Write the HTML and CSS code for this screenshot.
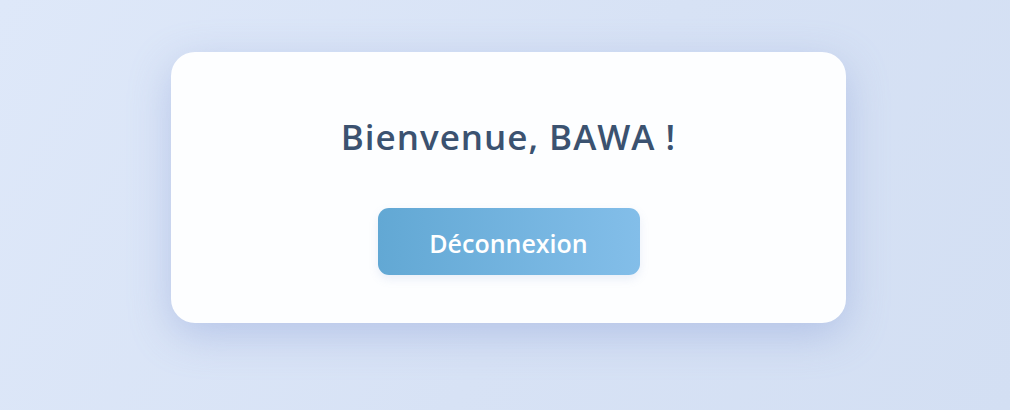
FILE: index.html
```html
<!DOCTYPE html>
<html lang="fr">
<head>
<meta charset="utf-8">
<title>Bienvenue</title>
<link rel="stylesheet" href="styles.css">
</head>
<body>
<main class="page">
  <section class="card">
    <h1 class="title">Bienvenue, BAWA !</h1>
    <button class="logout" type="button">Déconnexion</button>
  </section>
</main>
</body>
</html>
```
FILE: styles.css
```css
html, body {
  margin: 0;
  height: 100%;
}
body {
  background: linear-gradient(120deg, #dee8f9 0%, #d7e2f5 55%, #d3dff3 100%);
  font-family: "Open Sans", "Noto Sans", sans-serif;
}
.page {
  display: flex;
  justify-content: center;
  padding: 52px 0 0 7px;
  box-sizing: border-box;
}
.card {
  width: 675px;
  height: 271px;
  box-sizing: border-box;
  background: #fdfeff;
  border-radius: 24px;
  box-shadow: 0 12px 40px rgba(140, 160, 215, 0.45);
  display: flex;
  flex-direction: column;
  align-items: center;
  padding-top: 62px;
}
.title {
  margin: 0;
  font-size: 35px;
  font-weight: 600;
  line-height: 46px;
  letter-spacing: 1px;
  color: #3b5270;
}
.logout {
  margin-top: 48px;
  width: 262px;
  height: 67px;
  border: none;
  border-radius: 11px;
  background: linear-gradient(90deg, #62a8d4 0%, #83bee9 100%);
  color: #ffffff;
  font-family: inherit;
  font-size: 25px;
  font-weight: 600;
  padding: 2px 0 0;
  box-shadow: 0 4px 10px rgba(120, 150, 210, 0.15);
  cursor: pointer;
}
```
